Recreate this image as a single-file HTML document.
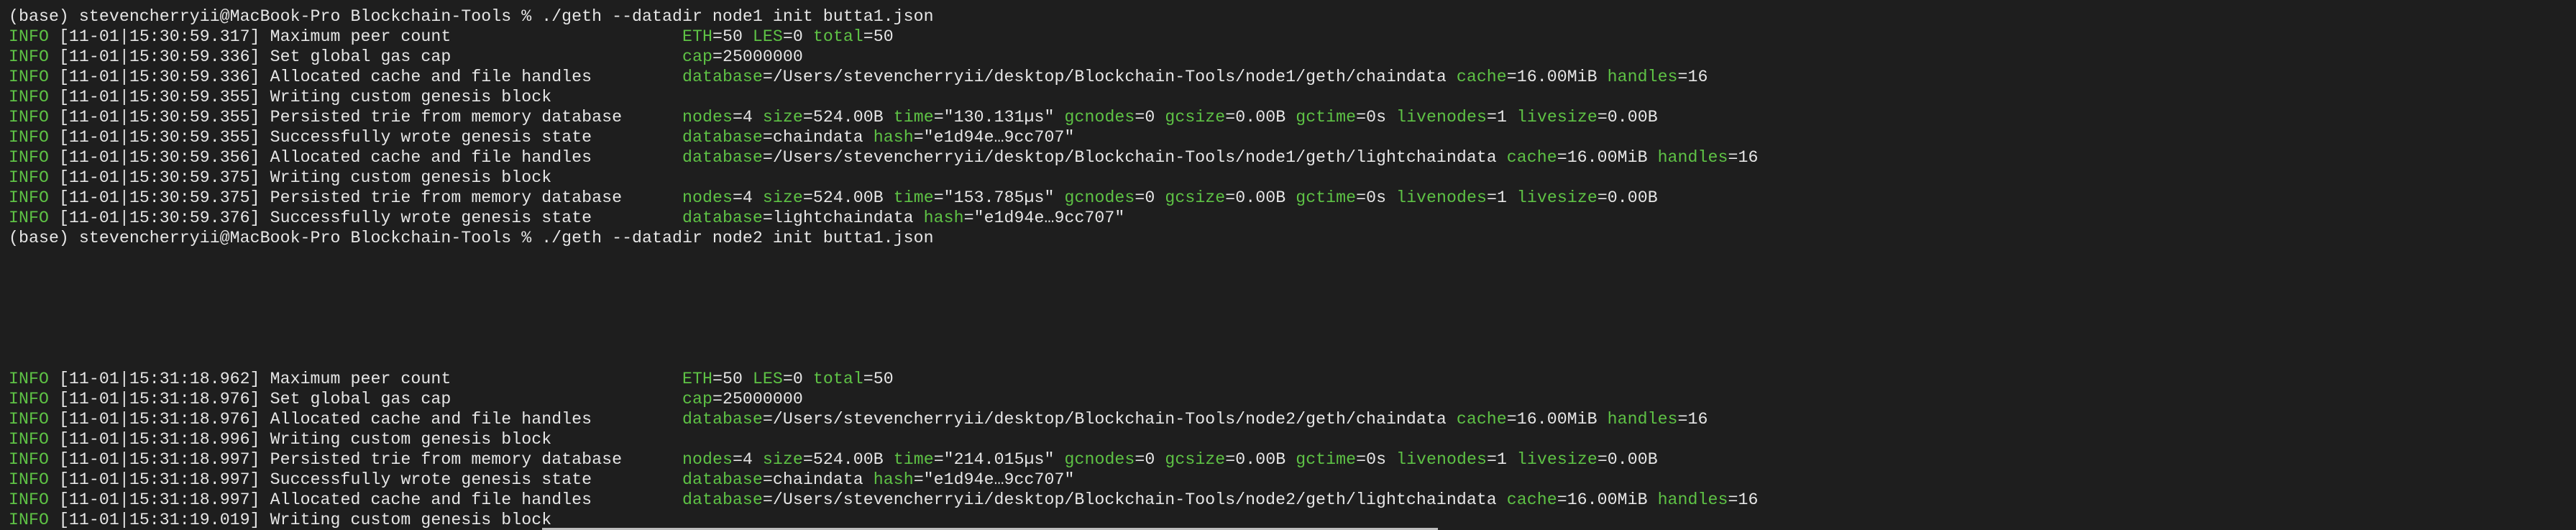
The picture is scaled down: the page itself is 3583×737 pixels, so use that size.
<!DOCTYPE html>
<html><head><meta charset="utf-8"><style>
html,body{margin:0;padding:0;background:#1e1e1e;width:3583px;height:737px;overflow:hidden}
pre{position:absolute;left:12px;top:9px;margin:0;font-family:"Liberation Mono",monospace;font-size:23.2px;letter-spacing:0.07px;line-height:28px;color:#e6e6e6;white-space:pre}
.g{color:#5ec245}
.bar{position:absolute;left:754px;top:734px;width:1246px;height:3px;background:#bdbdbd}
</style></head><body>
<pre>(base) stevencherryii@MacBook-Pro Blockchain-Tools % ./geth --datadir node1 init butta1.json
<span class="g">INFO</span> [11-01|15:30:59.317] Maximum peer count                       <span class="g">ETH</span>=50 <span class="g">LES</span>=0 <span class="g">total</span>=50
<span class="g">INFO</span> [11-01|15:30:59.336] Set global gas cap                       <span class="g">cap</span>=25000000
<span class="g">INFO</span> [11-01|15:30:59.336] Allocated cache and file handles         <span class="g">database</span>=/Users/stevencherryii/desktop/Blockchain-Tools/node1/geth/chaindata <span class="g">cache</span>=16.00MiB <span class="g">handles</span>=16
<span class="g">INFO</span> [11-01|15:30:59.355] Writing custom genesis block
<span class="g">INFO</span> [11-01|15:30:59.355] Persisted trie from memory database      <span class="g">nodes</span>=4 <span class="g">size</span>=524.00B <span class="g">time</span>="130.131µs" <span class="g">gcnodes</span>=0 <span class="g">gcsize</span>=0.00B <span class="g">gctime</span>=0s <span class="g">livenodes</span>=1 <span class="g">livesize</span>=0.00B
<span class="g">INFO</span> [11-01|15:30:59.355] Successfully wrote genesis state         <span class="g">database</span>=chaindata <span class="g">hash</span>="e1d94e…9cc707"
<span class="g">INFO</span> [11-01|15:30:59.356] Allocated cache and file handles         <span class="g">database</span>=/Users/stevencherryii/desktop/Blockchain-Tools/node1/geth/lightchaindata <span class="g">cache</span>=16.00MiB <span class="g">handles</span>=16
<span class="g">INFO</span> [11-01|15:30:59.375] Writing custom genesis block
<span class="g">INFO</span> [11-01|15:30:59.375] Persisted trie from memory database      <span class="g">nodes</span>=4 <span class="g">size</span>=524.00B <span class="g">time</span>="153.785µs" <span class="g">gcnodes</span>=0 <span class="g">gcsize</span>=0.00B <span class="g">gctime</span>=0s <span class="g">livenodes</span>=1 <span class="g">livesize</span>=0.00B
<span class="g">INFO</span> [11-01|15:30:59.376] Successfully wrote genesis state         <span class="g">database</span>=lightchaindata <span class="g">hash</span>="e1d94e…9cc707"
(base) stevencherryii@MacBook-Pro Blockchain-Tools % ./geth --datadir node2 init butta1.json






<span class="g">INFO</span> [11-01|15:31:18.962] Maximum peer count                       <span class="g">ETH</span>=50 <span class="g">LES</span>=0 <span class="g">total</span>=50
<span class="g">INFO</span> [11-01|15:31:18.976] Set global gas cap                       <span class="g">cap</span>=25000000
<span class="g">INFO</span> [11-01|15:31:18.976] Allocated cache and file handles         <span class="g">database</span>=/Users/stevencherryii/desktop/Blockchain-Tools/node2/geth/chaindata <span class="g">cache</span>=16.00MiB <span class="g">handles</span>=16
<span class="g">INFO</span> [11-01|15:31:18.996] Writing custom genesis block
<span class="g">INFO</span> [11-01|15:31:18.997] Persisted trie from memory database      <span class="g">nodes</span>=4 <span class="g">size</span>=524.00B <span class="g">time</span>="214.015µs" <span class="g">gcnodes</span>=0 <span class="g">gcsize</span>=0.00B <span class="g">gctime</span>=0s <span class="g">livenodes</span>=1 <span class="g">livesize</span>=0.00B
<span class="g">INFO</span> [11-01|15:31:18.997] Successfully wrote genesis state         <span class="g">database</span>=chaindata <span class="g">hash</span>="e1d94e…9cc707"
<span class="g">INFO</span> [11-01|15:31:18.997] Allocated cache and file handles         <span class="g">database</span>=/Users/stevencherryii/desktop/Blockchain-Tools/node2/geth/lightchaindata <span class="g">cache</span>=16.00MiB <span class="g">handles</span>=16
<span class="g">INFO</span> [11-01|15:31:19.019] Writing custom genesis block</pre>
<div class="bar"></div>
</body></html>
